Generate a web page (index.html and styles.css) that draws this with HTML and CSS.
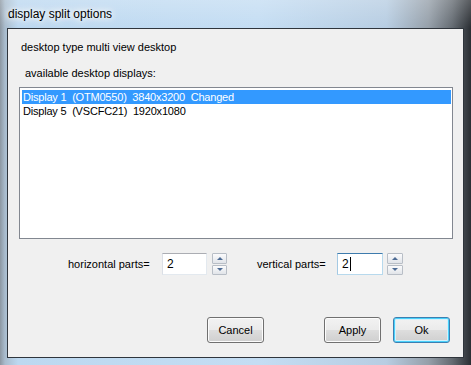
FILE: index.html
```html
<!DOCTYPE html>
<html lang="en">
<head>
    <meta charset="UTF-8">
    <title>display split options</title>
    <link rel="stylesheet" href="styles.css">
</head>
<body>
    <div class="window">
        <div class="titlebar">
            <span class="title">display split options</span>
        </div>
        <div class="client">
            <div class="type-line">desktop type multi view desktop</div>
            <div class="list-label">available desktop displays:</div>
            <div class="listbox">
                <div class="item selected">Display 1  (OTM0550)  3840x3200  Changed</div>
                <div class="item">Display 5  (VSCFC21)  1920x1080</div>
            </div>
            <div class="parts-row">
                <span class="part-label horiz">horizontal parts=</span>
                <div class="edit horiz-edit">2</div>
                <div class="spin horiz-spin">
                    <div class="spin-btn"><span class="arrow up"></span></div>
                    <div class="spin-btn"><span class="arrow down"></span></div>
                </div>
                <span class="part-label vert">vertical parts=</span>
                <div class="edit vert-edit focused">2<span class="caret"></span></div>
                <div class="spin vert-spin">
                    <div class="spin-btn"><span class="arrow up"></span></div>
                    <div class="spin-btn"><span class="arrow down"></span></div>
                </div>
            </div>
            <div class="buttons">
                <button class="btn cancel">Cancel</button>
                <button class="btn apply">Apply</button>
                <button class="btn ok default">Ok</button>
            </div>
        </div>
    </div>
</body>
</html>
```

FILE: styles.css
```css
body {
    margin: 0;
    font-family: "Liberation Sans", Arial, sans-serif;
    background: #1c2026;
}

.window {
    width: 471px;
    height: 365px;
    box-sizing: border-box;
    padding: 0 7px 7px 7px;
    display: flex;
    flex-direction: column;
    background:
        linear-gradient(to bottom, rgba(255, 255, 255, 0.22) 0, rgba(255, 255, 255, 0) 28px),
        linear-gradient(to right, #8c97a2 0, #a9bccd 5px, #bcd8f0 18px, #c4ddf3 55%, #b7cde2 82%, #959fa9 91%, #646b72 96%, #2a2e33 100%);
}

.titlebar {
    height: 28px;
    display: flex;
    align-items: center;
    padding-left: 1px;
    padding-bottom: 1px;
    box-sizing: border-box;
}

.title {
    font-size: 12px;
    color: #000;
    text-shadow: 0 0 5px #fff, 0 0 9px #fff, 0 0 12px #fff;
}

.client {
    flex: 1;
    border: 1px solid #2f353c;
    background: #f0f0f0;
    font-size: 11px;
    color: #000;
    display: flex;
    flex-direction: column;
}

.type-line {
    margin: 11px 0 0 13px;
    line-height: 14px;
}

.list-label {
    margin: 12px 0 0 17px;
    line-height: 14px;
}

.listbox {
    margin: 7px 0 0 11px;
    width: 434px;
    height: 152px;
    box-sizing: border-box;
    border: 1px solid #828790;
    background: #fff;
    padding: 2px 1px 0 2px;
}

.item {
    height: 14px;
    line-height: 14px;
    padding-left: 1px;
    white-space: pre;
    letter-spacing: -0.2px;
}

.selected {
    background: #3399ff;
    color: #fff;
}

.parts-row {
    margin-top: 14px;
    height: 22px;
    display: flex;
    align-items: center;
    padding-left: 60px;
}

.part-label {
    line-height: 14px;
}

.horiz {
    width: 94px;
}

.vert {
    width: 80px;
    margin-left: 30px;
}

.edit {
    height: 22px;
    box-sizing: border-box;
    border: 1px solid #e3e9ef;
    border-top-color: #abadb3;
    border-left-color: #dbdfe6;
    background: #fff;
    font-size: 12px;
    line-height: 18px;
    padding-left: 4px;
    display: flex;
    align-items: center;
}

.horiz-edit {
    width: 45px;
}

.vert-edit {
    width: 46px;
}

.focused {
    border-color: #b7d9ed;
    border-top-color: #3d7bad;
    border-left-color: #a4c9e3;
}

.caret {
    display: inline-block;
    width: 1px;
    height: 14px;
    background: #000;
    margin-left: 1px;
}

.spin {
    height: 22px;
    display: flex;
    flex-direction: column;
    gap: 1px;
}

.horiz-spin {
    width: 15px;
    margin-left: 5px;
}

.vert-spin {
    width: 16px;
    margin-left: 4px;
}

.spin-btn {
    flex: 1;
    box-sizing: border-box;
    border: 1px solid #b8bec6;
    border-radius: 1px;
    background: linear-gradient(to bottom, #fbfbfc 0, #eef0f3 50%, #e1e4e9 100%);
    display: flex;
    align-items: center;
    justify-content: center;
}

.arrow {
    width: 0;
    height: 0;
    border-left: 3px solid transparent;
    border-right: 3px solid transparent;
}

.up {
    border-bottom: 3px solid #4d6b94;
}

.down {
    border-top: 3px solid #4d6b94;
}

.buttons {
    margin-top: 42px;
    display: flex;
    padding-left: 199px;
}

.btn {
    width: 57px;
    height: 26px;
    box-sizing: border-box;
    border: 1px solid #707070;
    border-radius: 3px;
    background: linear-gradient(to bottom, #f2f2f2 0, #ebebeb 48%, #dddddd 52%, #cfcfcf 100%);
    box-shadow: inset 0 0 0 1px #fcfcfc;
    font-family: "Liberation Sans", Arial, sans-serif;
    font-size: 11px;
    color: #000;
    padding: 0;
}

.apply {
    margin-left: 60px;
}

.ok {
    margin-left: 12px;
}

.default {
    border-color: #3c7fb1;
    box-shadow: inset 0 0 0 1px #48d1fb, inset 0 0 0 2px #d4f1fc;
}
```
